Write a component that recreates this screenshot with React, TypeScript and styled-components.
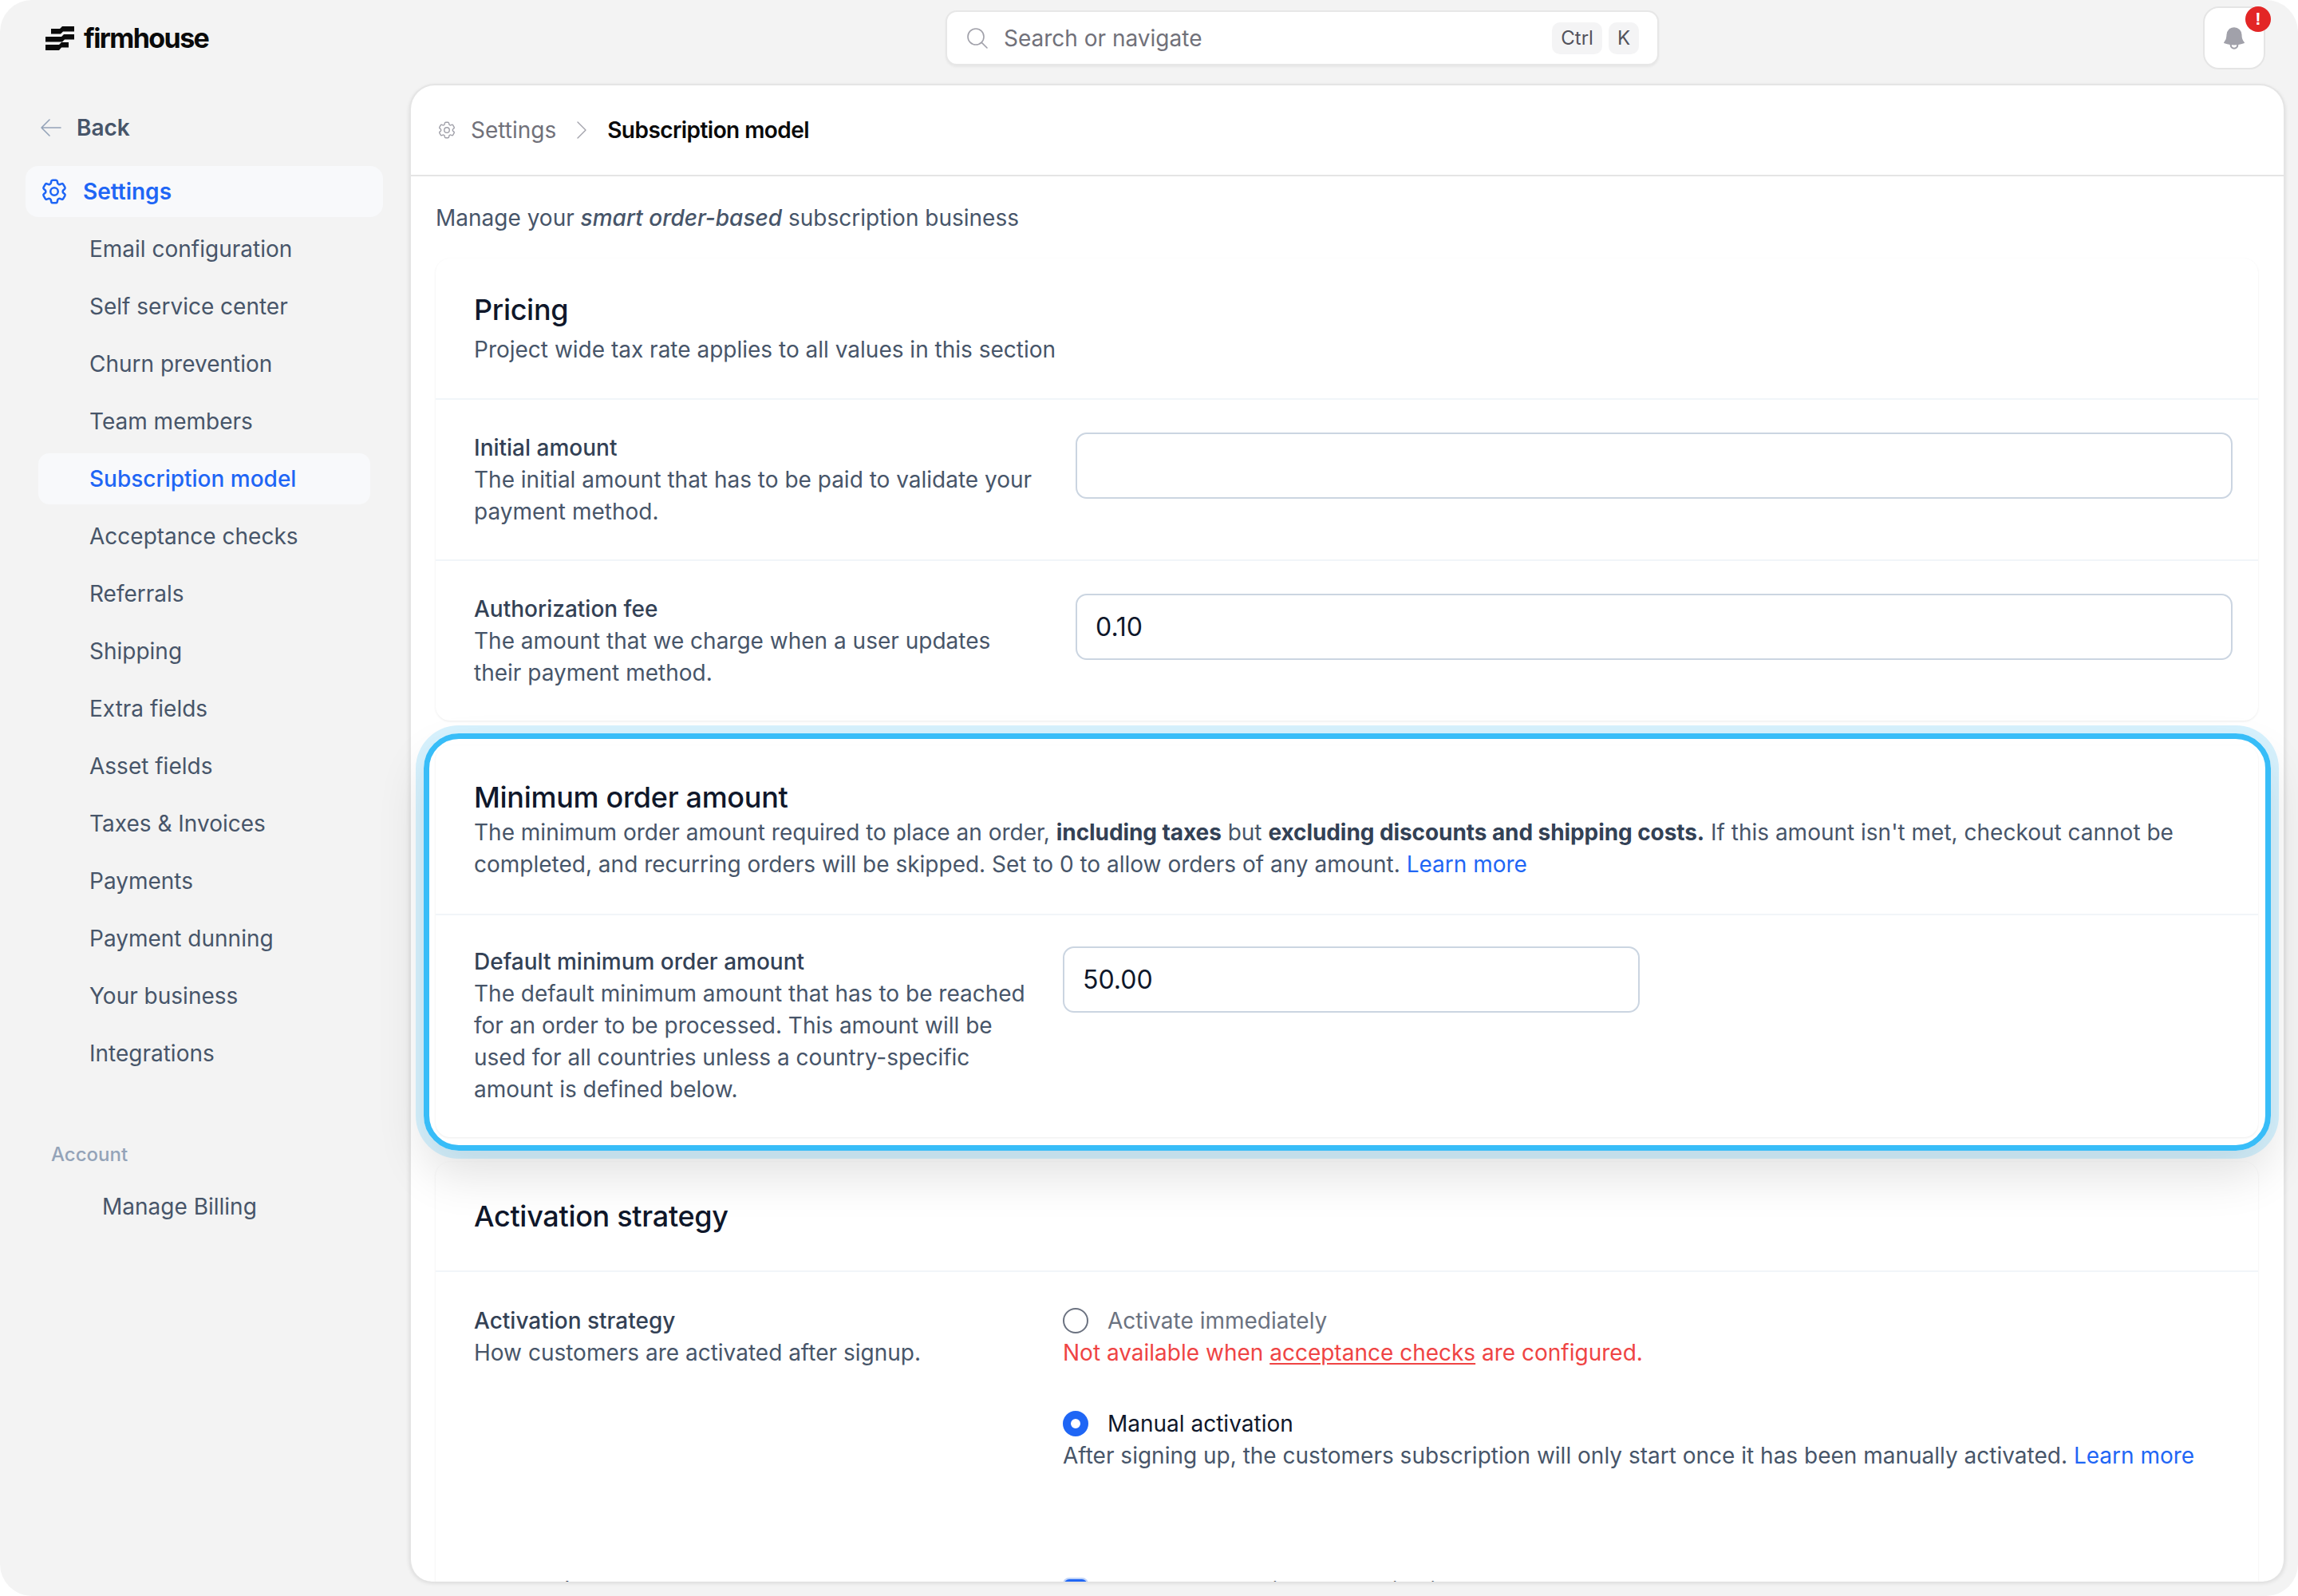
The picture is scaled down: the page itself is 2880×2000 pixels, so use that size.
import React from 'react';
import styled, { createGlobalStyle } from 'styled-components';
import {
  HiBell,
  HiOutlineArrowLeft,
  HiOutlineChevronRight,
  HiOutlineCog6Tooth,
  HiOutlineMagnifyingGlass,
} from 'react-icons/hi2';

const GlobalStyle = createGlobalStyle`
  html, body {
    margin: 0;
    padding: 0;
    background: #fff;
  }
  body {
    font-family: Inter, "Liberation Sans", sans-serif;
    font-size: 28px;
    line-height: 40px;
    color: #475569;
  }
`;

const Window = styled.div`
  position: relative;
  width: 2880px;
  height: 2000px;
  background: #f3f3f3;
  border-radius: 40px;
  overflow: hidden;
`;

const TopBar = styled.header`
  display: grid;
  grid-template-columns: 1185px 894px 1fr;
  height: 105px;
  padding-top: 8px;
  box-sizing: border-box;
`;

const Logo = styled.div`
  display: flex;
  align-items: center;
  gap: 12px;
  height: 79px;
  padding-left: 57px;
`;

const LogoText = styled.span`
  font-size: 34px;
  font-weight: 700;
  letter-spacing: -1.6px;
  color: #0a0a0a;
`;

const Search = styled.div`
  display: flex;
  align-items: center;
  height: 69px;
  margin-top: 5px;
  padding: 0 23px 0 22px;
  box-sizing: border-box;
  background: #fff;
  border: 2px solid #e7e7e7;
  border-radius: 14px;
  box-shadow: 0 2px 3px rgba(0, 0, 0, 0.05);
  color: #71717a;
`;

const SearchIcon = styled(HiOutlineMagnifyingGlass)`
  width: 32px;
  height: 32px;
  margin-right: 17px;
  color: #a1a1aa;
  stroke-width: 1.2;
`;

const SearchHint = styled.span`
  flex: 1;
`;

const Key = styled.kbd`
  display: flex;
  align-items: center;
  justify-content: center;
  height: 40px;
  padding: 0 11px;
  margin-left: 8px;
  background: #f4f4f5;
  border-radius: 10px;
  font-family: inherit;
  font-size: 24px;
  color: #52525b;
`;

const BellSlot = styled.div`
  display: flex;
  justify-content: flex-end;
  padding-right: 41px;
`;

const BellButton = styled.button`
  position: relative;
  display: flex;
  align-items: center;
  justify-content: center;
  width: 78px;
  height: 79px;
  padding: 0;
  background: #fff;
  border: 2px solid #e5e5e5;
  border-radius: 20px;
  color: #a1a1aa;
`;

const Badge = styled.span`
  position: absolute;
  top: -2px;
  right: -9px;
  width: 32px;
  height: 32px;
  border-radius: 50%;
  background: #e32626;
  color: #fff;
  font-size: 22px;
  font-weight: 700;
  line-height: 32px;
  text-align: center;
`;

const Layout = styled.div`
  display: flex;
  height: 1877px;
`;

const Sidebar = styled.nav`
  flex: 0 0 513px;
  padding-top: 23px;
  box-sizing: border-box;
`;

const BackLink = styled.a`
  display: flex;
  align-items: center;
  gap: 16px;
  height: 64px;
  margin-bottom: 16px;
  padding-left: 48px;
  font-weight: 600;
  color: #475569;
  svg {
    width: 32px;
    height: 32px;
    color: #94a3b8;
    stroke-width: 1.2;
  }
`;

const SettingsLink = styled.a`
  display: flex;
  align-items: center;
  gap: 20px;
  width: 448px;
  height: 64px;
  margin: 0 0 8px 32px;
  padding-left: 20px;
  box-sizing: border-box;
  background: #f8f9fb;
  border-radius: 16px;
  font-weight: 600;
  color: #1f66f5;
  svg {
    width: 38px;
    height: 38px;
    margin-left: -3px;
    margin-right: -3px;
    stroke-width: 1.6;
  }
`;

const SubLink = styled.a<{ $active?: boolean }>`
  display: flex;
  align-items: center;
  width: 416px;
  height: 64px;
  margin: 0 0 8px 48px;
  padding-left: 64px;
  box-sizing: border-box;
  border-radius: 14px;
  background: ${(p) => (p.$active ? '#f8f9fb' : 'transparent')};
  font-weight: ${(p) => (p.$active ? 500 : 400)};
  color: ${(p) => (p.$active ? '#1f66f5' : '#475569')};
`;

const SideHeading = styled.div`
  margin: 79px 0 17px 64px;
  font-size: 24px;
  line-height: 32px;
  font-weight: 500;
  color: #94a3b8;
`;

const AccountLink = styled.a`
  display: block;
  padding-left: 128px;
  line-height: 64px;
  color: #475569;
`;

const Panel = styled.main`
  flex: 1;
  margin-right: 16px;
  background: #fff;
  border: 2px solid #e5e5e5;
  border-bottom: 0;
  border-radius: 32px 32px 28px 28px;
  box-shadow: 0 2px 5px rgba(0, 0, 0, 0.1);
  overflow: hidden;
`;

const Breadcrumb = styled.div`
  display: flex;
  align-items: center;
  height: 112px;
  padding-left: 32px;
  border-bottom: 2px solid #e5e5e5;
  color: #71717a;
`;

const CrumbIcon = styled(HiOutlineCog6Tooth)`
  width: 26px;
  height: 26px;
  margin-right: 17px;
  color: #a1a1aa;
  stroke-width: 1.3;
`;

const CrumbArrow = styled(HiOutlineChevronRight)`
  width: 32px;
  height: 32px;
  margin: 0 16px;
  color: #a1a1aa;
  stroke-width: 1;
`;

const CrumbCurrent = styled.span`
  font-weight: 600;
  letter-spacing: -0.55px;
  color: #0a0a0a;
`;

const Content = styled.div`
  padding: 32px 32px 0 31px;
`;

const Intro = styled.p`
  margin: 0 0 31px;
  em {
    font-weight: 500;
  }
`;

const Card = styled.section`
  margin-bottom: 31px;
  background: #fff;
  border-radius: 18px;
  box-shadow: 0 1px 3px rgba(0, 0, 0, 0.08);
`;

const CardHead = styled.div<{ $top?: number; $bottom?: number }>`
  padding: ${(p) => p.$top ?? 38}px 48px ${(p) => p.$bottom ?? 41}px;
  border-bottom: 2px solid #f1f5f9;
`;

const CardTitle = styled.h2<{ $gap?: number }>`
  margin: 0 0 ${(p) => p.$gap ?? 0}px;
  font-size: 36px;
  line-height: 52px;
  font-weight: 500;
  letter-spacing: -0.3px;
  color: #0f172a;
`;

const CardText = styled.p`
  margin: 0;
  strong {
    font-weight: 700;
    letter-spacing: -0.08px;
    color: #334155;
  }
`;

const Row = styled.div<{ $labelWidth: number; $gap?: number; $top?: number; $plain?: boolean }>`
  display: grid;
  grid-template-columns: ${(p) => p.$labelWidth}px 1fr;
  column-gap: ${(p) => p.$gap ?? 32}px;
  padding: ${(p) => p.$top ?? 40}px 32px 40px 48px;
  border-bottom: ${(p) => (p.$plain ? '0' : '2px solid #f1f5f9')};
  &:last-child {
    border-bottom: 0;
  }
`;

const Label = styled.div`
  font-weight: 500;
  color: #334155;
`;

const Field = styled.input<{ $width?: number; $offset?: number }>`
  display: block;
  width: ${(p) => (p.$width ? `${p.$width}px` : '100%')};
  height: 83px;
  margin-top: ${(p) => p.$offset ?? 0}px;
  padding: 0 23px;
  box-sizing: border-box;
  background: #fff;
  border: 2px solid #cbd5e1;
  border-radius: 14px;
  outline: 0;
  font-family: inherit;
  font-size: 32px;
  color: #0f172a;
`;

const Link = styled.a`
  color: #1f66f5;
`;

const OptionLine = styled.div<{ $muted?: boolean }>`
  display: flex;
  align-items: center;
  gap: 24px;
  color: ${(p) => (p.$muted ? '#6b7280' : '#0f172a')};
`;

const Radio = styled.span<{ $checked?: boolean }>`
  flex: none;
  width: 32px;
  height: 32px;
  box-sizing: border-box;
  border-radius: 50%;
  border: ${(p) => (p.$checked ? '10px solid #1f66f5' : '2px solid #6b7280')};
  background: #fff;
`;

const ErrorText = styled.div`
  color: #ef4444;
  u {
    text-underline-offset: 3px;
  }
`;

const OptionGap = styled.div<{ $height: number }>`
  height: ${(p) => p.$height}px;
`;

const CheckBox = styled.span`
  flex: none;
  width: 28px;
  height: 28px;
  margin: 0 4px 0 2px;
  border-radius: 6px;
  background: #1f66f5;
  box-shadow: 0 0 0 2px #bfd3f8;
`;

const Highlight = styled.div`
  position: absolute;
  left: 531px;
  top: 919px;
  width: 2315px;
  height: 523px;
  box-sizing: border-box;
  border: 7px solid #38bdf8;
  border-radius: 44px;
  box-shadow: 0 0 0 10px rgba(56, 189, 248, 0.2),
    0 30px 60px 0 rgba(0, 0, 0, 0.12);
  pointer-events: none;
`;

const settingsLinks = [
  'Email configuration',
  'Self service center',
  'Churn prevention',
  'Team members',
  'Subscription model',
  'Acceptance checks',
  'Referrals',
  'Shipping',
  'Extra fields',
  'Asset fields',
  'Taxes & Invoices',
  'Payments',
  'Payment dunning',
  'Your business',
  'Integrations',
];

const LogoMark = () => (
  <svg width="36" height="30" viewBox="0 0 36 30" fill="#0a0a0a">
    <path d="M7 3h11l3-3h15v6.500H22l-3 3H7z" />
    <path d="M0 13h20l3-3h13v6.500H24l-3 3H0z" />
    <path d="M0 23h17l3-3h9v6.500H20l-3 3.500H0z" />
  </svg>
);

export default function App() {
  return (
    <Window>
      <GlobalStyle />
      <TopBar>
        <Logo>
          <LogoMark />
          <LogoText>firmhouse</LogoText>
        </Logo>
        <Search>
          <SearchIcon />
          <SearchHint>Search or navigate</SearchHint>
          <Key>Ctrl</Key>
          <Key>K</Key>
        </Search>
        <BellSlot>
          <BellButton>
            <HiBell size={34} />
            <Badge>!</Badge>
          </BellButton>
        </BellSlot>
      </TopBar>
      <Layout>
        <Sidebar>
          <BackLink>
            <HiOutlineArrowLeft />
            Back
          </BackLink>
          <SettingsLink>
            <HiOutlineCog6Tooth />
            Settings
          </SettingsLink>
          {settingsLinks.map((name) => (
            <SubLink key={name} $active={name === 'Subscription model'}>
              {name}
            </SubLink>
          ))}
          <SideHeading>Account</SideHeading>
          <AccountLink>Manage Billing</AccountLink>
        </Sidebar>
        <Panel>
          <Breadcrumb>
            <CrumbIcon />
            Settings
            <CrumbArrow />
            <CrumbCurrent>Subscription model</CrumbCurrent>
          </Breadcrumb>
          <Content>
            <Intro>
              Manage your <em>smart order-based</em> subscription business
            </Intro>
            <Card>
              <CardHead>
                <CardTitle $gap={4}>Pricing</CardTitle>
                <CardText>Project wide tax rate applies to all values in this section</CardText>
              </CardHead>
              <Row $labelWidth={708} $gap={46}>
                <div>
                  <Label>Initial amount</Label>
                  <CardText>
                    The initial amount that has to be paid to validate your payment method.
                  </CardText>
                </div>
                <Field $offset={1} defaultValue="" />
              </Row>
              <Row $labelWidth={708} $gap={46}>
                <div>
                  <Label>Authorization fee</Label>
                  <CardText>
                    The amount that we charge when a user updates their payment method.
                  </CardText>
                </div>
                <Field $offset={1} defaultValue="0.10" />
              </Row>
            </Card>
            <Card>
              <CardHead $top={39} $bottom={42}>
                <CardTitle $gap={-2}>Minimum order amount</CardTitle>
                <CardText>
                  The minimum order amount required to place an order,{' '}
                  <strong>including taxes</strong> but{' '}
                  <strong>excluding discounts and shipping costs.</strong> If this amount isn't
                  met, checkout cannot be completed, and recurring orders will be skipped. Set to 0
                  to allow orders of any amount. <Link>Learn more</Link>
                </CardText>
              </CardHead>
              <Row $labelWidth={706} $top={38}>
                <div>
                  <Label>Default minimum order amount</Label>
                  <CardText>
                    The default minimum amount that has to be reached for an order to be processed.
                    This amount will be used for all countries unless a country-specific amount is
                    defined below.
                  </CardText>
                </div>
                <Field $width={723} $offset={1} defaultValue="50.00" />
              </Row>
            </Card>
            <Card>
              <CardHead $top={42} $bottom={42}>
                <CardTitle>Activation strategy</CardTitle>
              </CardHead>
              <Row $labelWidth={706} $top={41} $plain>
                <div>
                  <Label>Activation strategy</Label>
                  <CardText>How customers are activated after signup.</CardText>
                </div>
                <div>
                  <OptionLine $muted>
                    <Radio />
                    Activate immediately
                  </OptionLine>
                  <ErrorText>
                    Not available when <u>acceptance checks</u> are configured.
                  </ErrorText>
                  <OptionGap $height={49} />
                  <OptionLine>
                    <Radio $checked />
                    Manual activation
                  </OptionLine>
                  <CardText>
                    After signing up, the customers subscription will only start once it has been
                    manually activated. <Link>Learn more</Link>
                  </CardText>
                  <OptionGap $height={49} />
                </div>
              </Row>
              <Row $labelWidth={706} $plain>
                <Label>Automatic</Label>
                <OptionLine>
                  <CheckBox />
                  Enable automatic order activation
                </OptionLine>
              </Row>
            </Card>
          </Content>
        </Panel>
      </Layout>
      <Highlight />
    </Window>
  );
}
